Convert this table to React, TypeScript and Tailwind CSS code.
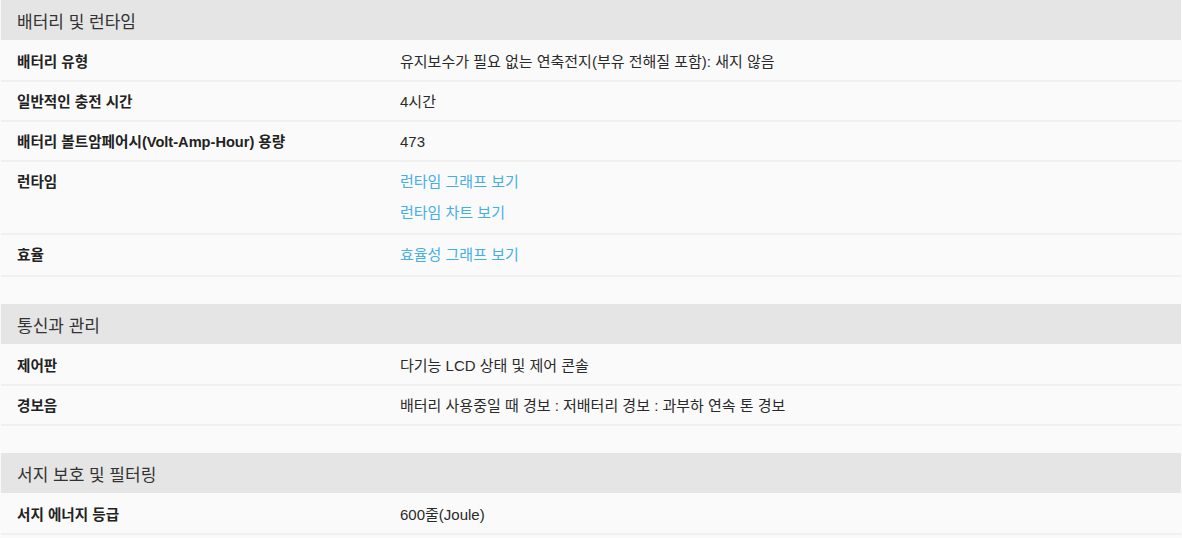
const font = "font-['Liberation_Sans','Noto_Sans_CJK_KR',sans-serif]";

type Row = { label: string; values: string[]; link?: boolean };
type Section = { title: string; rows: Row[] };

const sections: Section[] = [
  {
    title: "배터리 및 런타임",
    rows: [
      { label: "배터리 유형", values: ["유지보수가 필요 없는 연축전지(부유 전해질 포함): 새지 않음"] },
      { label: "일반적인 충전 시간", values: ["4시간"] },
      { label: "배터리 볼트암페어시(Volt-Amp-Hour) 용량", values: ["473"] },
      { label: "런타임", values: ["런타임 그래프 보기", "런타임 차트 보기"], link: true },
      { label: "효율", values: ["효율성 그래프 보기"], link: true },
    ],
  },
  {
    title: "통신과 관리",
    rows: [
      { label: "제어판", values: ["다기능 LCD 상태 및 제어 콘솔"] },
      { label: "경보음", values: ["배터리 사용중일 때 경보 : 저배터리 경보 : 과부하 연속 톤 경보"] },
    ],
  },
  {
    title: "서지 보호 및 필터링",
    rows: [{ label: "서지 에너지 등급", values: ["600줄(Joule)"] }],
  },
];

function SpecRow({ row }: { row: Row }) {
  return (
    <div className="flex border-b-2 border-[#f0f0f0] pt-[12px] pb-[10px] leading-[16px]">
      <div className="w-[399px] shrink-0 pl-[16px] text-[14.6px] font-bold text-[#222]">{row.label}</div>
      <div className={`flex flex-col gap-[15px] text-[15px] ${row.link ? "pb-[2px]" : ""}`}>
        {row.values.map((v) => (
          <span key={v} className={row.link ? "text-[#43afe6]" : "text-[#2a2a2a]"}>
            {v}
          </span>
        ))}
      </div>
    </div>
  );
}

export default function App() {
  return (
    <div className={`min-h-[538px] bg-[#fafafa] pl-px pr-px ${font}`}>
      <div className="flex flex-col gap-[27px]">
        {sections.map((s) => (
          <section key={s.title}>
            <h3 className="mb-[2px] flex h-10 items-center bg-[#e5e5e5] pt-[5px] pl-[16px] text-[17px] text-[#333]">
              {s.title}
            </h3>
            {s.rows.map((r) => (
              <SpecRow key={r.label} row={r} />
            ))}
          </section>
        ))}
      </div>
    </div>
  );
}
